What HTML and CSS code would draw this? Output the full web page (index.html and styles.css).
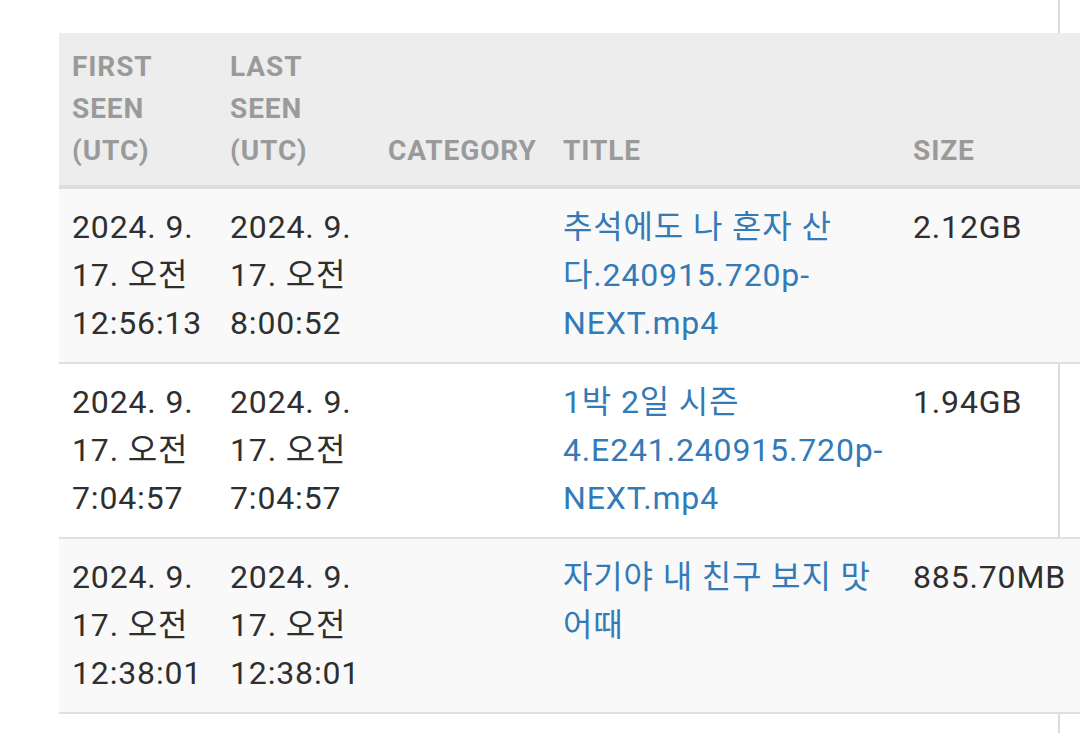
FILE: index.html
```html
<!DOCTYPE html>
<html lang="ko">
<head>
<meta charset="utf-8">
<title>Torrents</title>
<link rel="stylesheet" href="styles.css">
</head>
<body>
<div class="page">
  <table class="torrents">
    <colgroup>
      <col class="c-first">
      <col class="c-last">
      <col class="c-cat">
      <col class="c-title">
      <col class="c-size">
    </colgroup>
    <thead>
      <tr>
        <th>FIRST SEEN (UTC)</th>
        <th>LAST SEEN (UTC)</th>
        <th>CATEGORY</th>
        <th>TITLE</th>
        <th>SIZE</th>
      </tr>
    </thead>
    <tbody>
      <tr class="odd">
        <td>2024. 9. 17. 오전 12:56:13</td>
        <td>2024. 9. 17. 오전 8:00:52</td>
        <td></td>
        <td><a href="#">추석에도 나 혼자 산다.240915.720p-NEXT.mp4</a></td>
        <td>2.12GB</td>
      </tr>
      <tr>
        <td>2024. 9. 17. 오전 7:04:57</td>
        <td>2024. 9. 17. 오전 7:04:57</td>
        <td></td>
        <td><a href="#">1박 2일 시즌 4.E241.240915.720p-NEXT.mp4</a></td>
        <td>1.94GB</td>
      </tr>
      <tr class="odd">
        <td>2024. 9. 17. 오전 12:38:01</td>
        <td>2024. 9. 17. 오전 12:38:01</td>
        <td></td>
        <td><a href="#">자기야 내 친구 보지 맛 어때</a></td>
        <td>885.70MB</td>
      </tr>
    </tbody>
  </table>
</div>
</body>
</html>
```
FILE: styles.css
```css
html, body {
  margin: 0;
  padding: 0;
  overflow: hidden;
  background: #fff;
}

body {
  font-family: Roboto, "Noto Sans CJK KR", sans-serif;
  color: #2f2f2f;
}

.page {
  box-sizing: border-box;
  width: 1060px;
  min-height: 733px;
  padding: 33px 0 0 59px;
  border-right: 2px solid #dcdcdc;
}

.torrents {
  border-collapse: collapse;
  table-layout: fixed;
  width: 1100px;
}

.c-first { width: 158px; }
.c-last { width: 158px; }
.c-cat { width: 175px; }
.c-title { width: 350px; }
.c-size { width: 259px; }

.torrents th {
  background: #ededed;
  color: #9a9a9a;
  font-weight: 700;
  font-size: 28px;
  line-height: 42px;
  letter-spacing: 0.9px;
  text-align: left;
  vertical-align: bottom;
  padding: 13px 13px 13px 13px;
  border-bottom: 4px solid #dddddd;
}

.torrents td {
  font-size: 32px;
  line-height: 48px;
  letter-spacing: 0.85px;
  vertical-align: top;
  padding: 14px 13px 15px 13px;
  border-bottom: 2px solid #e0e0e0;
}

.torrents tr.odd td {
  background: #f9f9f9;
}

.torrents a {
  color: #337ab7;
  text-decoration: none;
}
```
